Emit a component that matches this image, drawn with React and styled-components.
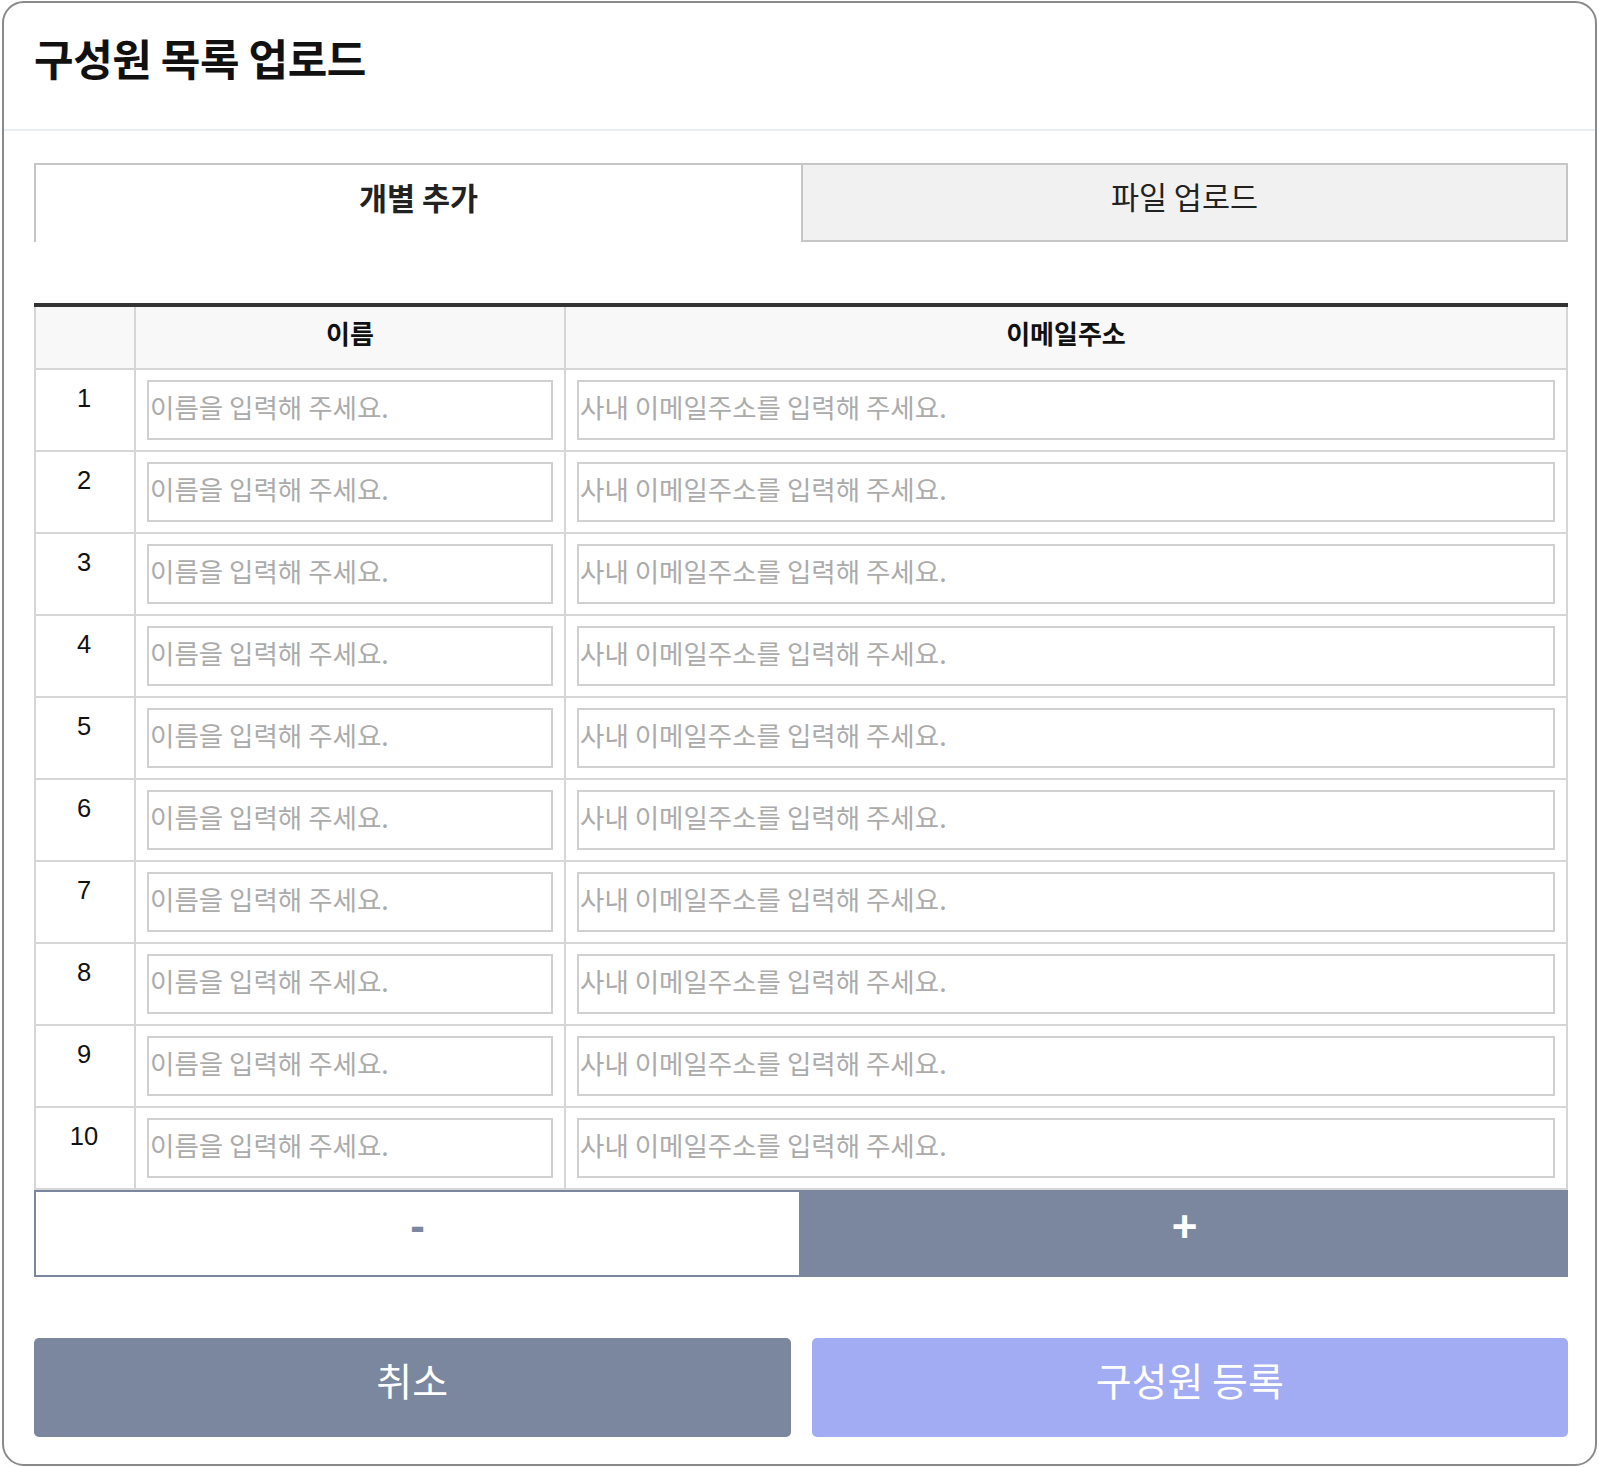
import React, { useState } from 'react';
import styled, { createGlobalStyle } from 'styled-components';

const GlobalStyle = createGlobalStyle`
  html, body {
    margin: 0;
    padding: 0;
    background: #ffffff;
  }
  body {
    font-family: "Noto Sans CJK KR", "Noto Sans", sans-serif;
    color: #222;
  }
  * {
    box-sizing: border-box;
  }
`;

const Modal = styled.div`
  margin: 1px 2px 2px 2px;
  border: 2px solid #8a8a8a;
  border-radius: 22px;
  background: #fff;
  overflow: hidden;
`;

const Header = styled.header`
  height: 128px;
  padding: 24px 27px 0 30px;
  border-bottom: 2px solid #e9ecf1;
`;

const Title = styled.h1`
  margin: 0;
  font-size: 43px;
  line-height: 60px;
  font-weight: 700;
  color: #111;
  letter-spacing: -0.4px;
`;

const Body = styled.div`
  padding: 32px 27px 27px 30px;
`;

const Tabs = styled.div`
  display: grid;
  grid-template-columns: 1fr 1fr;
  height: 79px;
`;

const Tab = styled.button`
  font-family: inherit;
  font-size: 30.5px;
  color: #222;
  font-weight: ${p => (p.$active ? 700 : 400)};
  background: ${p => (p.$active ? '#ffffff' : '#f1f1f1')};
  border: 2px solid #c6c6c6;
  border-right: ${p => (p.$active ? 'none' : '2px solid #c6c6c6')};
  border-bottom: ${p => (p.$active ? 'none' : '2px solid #c6c6c6')};
  padding: 0 0 14px;
  cursor: pointer;
`;

const Table = styled.table`
  width: 100%;
  margin-top: 61px;
  border-collapse: collapse;
  border-top: 4px solid #333;
  table-layout: fixed;
`;

const HeadCell = styled.th`
  height: 64px;
  background: #f8f8f8;
  border: 2px solid #d6d6d6;
  border-top: none;
  font-size: 26px;
  font-weight: 700;
  color: #111;
  padding: 0 0 10px;
`;

const NumCell = styled.td`
  border: 2px solid #d6d6d6;
  vertical-align: top;
  text-align: center;
  padding: 10px 2px 0 0;
  font-family: "Liberation Sans", Arial, sans-serif;
  font-size: 25.5px;
  line-height: 36px;
  color: #111;
`;

const InputCell = styled.td`
  border: 2px solid #d6d6d6;
  padding: 10px 11px;
  height: 82px;
`;

const Field = styled.input`
  display: block;
  width: 100%;
  height: 60px;
  border: 2px solid #d0d0d0;
  padding: 0 0 8px 1px;
  font-family: "Noto Sans CJK KR", sans-serif;
  font-size: 26.5px;
  color: #222;
  outline: none;
  &::placeholder {
    color: #ababab;
  }
`;

const Stepper = styled.div`
  display: grid;
  grid-template-columns: 1fr 1fr;
  height: 87px;
`;

const StepButton = styled.button`
  font-family: "Liberation Sans", Arial, sans-serif;
  font-size: 44px;
  font-weight: 900;
  line-height: 1;
  padding: 0 0 ${p => (p.$filled ? '13px' : '16px')};
  cursor: pointer;
  border: 2px solid #7b879e;
  background: ${p => (p.$filled ? '#7b879e' : '#ffffff')};
  color: ${p => (p.$filled ? '#ffffff' : '#7b879e')};
`;

const Actions = styled.div`
  display: grid;
  grid-template-columns: 1fr 1fr;
  gap: 21px;
  margin-top: 61px;
`;

const ActionButton = styled.button`
  height: 99px;
  border: none;
  border-radius: 5px;
  font-family: "Noto Sans CJK KR", sans-serif;
  font-size: 39px;
  color: #fff;
  padding: 0 0 18px;
  background: ${p => (p.$primary ? '#a2acf2' : '#7b879e')};
  cursor: pointer;
`;

export default function App() {
  const [tab, setTab] = useState('single');
  const [count, setCount] = useState(10);
  const rows = Array.from({ length: count }, (_, i) => i + 1);

  return (
    <>
      <GlobalStyle />
      <Modal>
        <Header>
          <Title>구성원 목록 업로드</Title>
        </Header>
        <Body>
          <Tabs>
            <Tab $active={tab === 'single'} onClick={() => setTab('single')}>개별 추가</Tab>
            <Tab $active={tab === 'file'} onClick={() => setTab('file')}>파일 업로드</Tab>
          </Tabs>
          <Table>
            <colgroup>
              <col style={{ width: '100px' }} />
              <col style={{ width: '430px' }} />
              <col />
            </colgroup>
            <thead>
              <tr>
                <HeadCell />
                <HeadCell>이름</HeadCell>
                <HeadCell>이메일주소</HeadCell>
              </tr>
            </thead>
            <tbody>
              {rows.map(n => (
                <tr key={n}>
                  <NumCell>{n}</NumCell>
                  <InputCell>
                    <Field placeholder="이름을 입력해 주세요." />
                  </InputCell>
                  <InputCell>
                    <Field placeholder="사내 이메일주소를 입력해 주세요." />
                  </InputCell>
                </tr>
              ))}
            </tbody>
          </Table>
          <Stepper>
            <StepButton onClick={() => setCount(c => Math.max(1, c - 1))}>-</StepButton>
            <StepButton $filled onClick={() => setCount(c => c + 1)}>+</StepButton>
          </Stepper>
          <Actions>
            <ActionButton>취소</ActionButton>
            <ActionButton $primary>구성원 등록</ActionButton>
          </Actions>
        </Body>
      </Modal>
    </>
  );
}
